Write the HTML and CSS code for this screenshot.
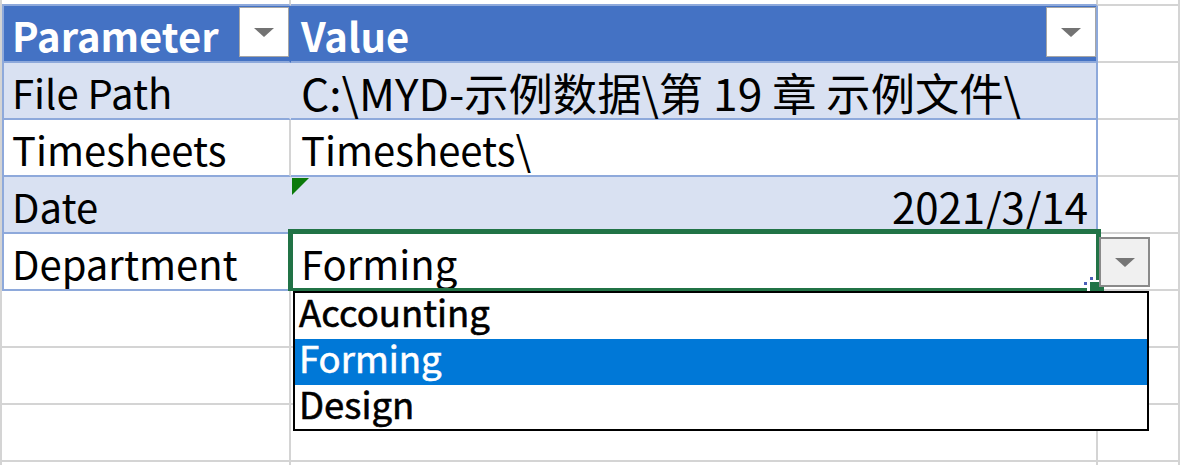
FILE: index.html
```html
<!DOCTYPE html>
<html lang="zh-CN">
<head>
<meta charset="utf-8">
<title>Parameters</title>
<link rel="stylesheet" href="styles.css">
</head>
<body>
<div class="sheet">
  <div class="c a top"></div><div class="c b top"></div><div class="c x"></div>

  <div class="c a t hd"><span>Parameter</span><span class="fbtn"></span></div>
  <div class="c b t hd"><span>Value</span><span class="fbtn"></span></div>
  <div class="c x"></div>

  <div class="c a t band"><span>File Path</span></div>
  <div class="c b t band"><span class="path">C:\MYD-示例数据\第 19 章 示例文件\</span></div>
  <div class="c x"></div>

  <div class="c a t wht"><span>Timesheets</span></div>
  <div class="c b t wht"><span>Timesheets\</span></div>
  <div class="c x"></div>

  <div class="c a t band"><span>Date</span></div>
  <div class="c b t band right err"><span class="num">2021/3/14</span></div>
  <div class="c x"></div>

  <div class="c a t wht"><span>Department</span></div>
  <div class="c b t wht"><span>Forming</span></div>
  <div class="c x"></div>

  <div class="c a"></div><div class="c b"></div><div class="c x"></div>
  <div class="c a"></div><div class="c b"></div><div class="c x"></div>
  <div class="c a"></div><div class="c b"></div><div class="c x"></div>
  <div class="c a"></div><div class="c b"></div><div class="c x"></div>
</div>

<div class="selection"></div>
<div class="handle"></div>
<div class="dot dot1"></div>
<div class="dot dot2"></div>
<div class="dvbtn"></div>

<ul class="dd">
  <li>Accounting</li>
  <li class="sel">Forming</li>
  <li>Design</li>
</ul>
</body>
</html>
```

FILE: styles.css
```css
html, body {
  margin: 0;
  padding: 0;
  background: #fff;
  overflow: hidden;
}
body {
  width: 1180px;
  height: 465px;
  position: relative;
  font-family: "Noto Sans CJK SC", "Noto Sans", sans-serif;
  color: #000;
}
.sheet {
  display: grid;
  grid-template-columns: 289px 807px 1fr;
  grid-template-rows: 6px;
  grid-auto-rows: 57px;
  border-left: 2px solid #d4d4d4;
  height: 465px;
  overflow: hidden;
}
.c {
  box-sizing: border-box;
  border-right: 2px solid #d4d4d4;
  border-bottom: 2px solid #d4d4d4;
  display: flex;
  align-items: flex-end;
  padding: 0 8px 2px 10px;
  font-size: 40px;
  line-height: 48px;
  white-space: nowrap;
  position: relative;
  min-width: 0;
}
.c.top { padding: 0; border-bottom-color: #8ea9db; }
.c.a.t { border-left: 2px solid #8ea9db; padding-left: 8px; }
.c.t { border-bottom-color: #8ea9db; }
.c.b.t { border-right-color: #8ea9db; }

.path { font-size: 44.3px; }
.num { font-size: 42px; }

.hd {
  background: #4472c4;
  color: #fff;
  font-weight: 700;
  justify-content: space-between;
  padding-right: 0;
}
.c.a.hd { border-right-color: #4472c4; }
.band { background: #d9e1f2; }
.c.a.band { border-right-color: #d9e1f2; }
.right { justify-content: flex-end; }

.fbtn {
  align-self: flex-start;
  margin-top: 1px;
  width: 50px;
  height: 50px;
  box-sizing: border-box;
  background: #fff;
  border: 1px solid #a6a6a6;
  display: flex;
  align-items: center;
  justify-content: center;
  flex: none;
}
.fbtn::after {
  content: "";
  border-left: 10px solid transparent;
  border-right: 10px solid transparent;
  border-top: 9px solid #737373;
}

.err::before {
  content: "";
  position: absolute;
  left: 1px;
  top: 1px;
  border-top: 17px solid #0b7a0b;
  border-right: 17px solid transparent;
}

.selection {
  position: absolute;
  left: 288px;
  top: 229px;
  width: 813px;
  height: 62px;
  box-sizing: border-box;
  border: 5px solid #217346;
  border-bottom-width: 3px;
}
.handle {
  position: absolute;
  left: 1087px;
  top: 280px;
  width: 17px;
  height: 12px;
  box-sizing: border-box;
  background: #217346;
  border-left: 3px solid #fff;
  border-top: 2px solid #fff;
}
.dot {
  position: absolute;
  width: 3px;
  height: 3px;
  background: #4a5eb8;
}
.dot1 { left: 1084px; top: 282px; }
.dot2 { left: 1090px; top: 277px; }

.dvbtn {
  position: absolute;
  left: 1099px;
  top: 237px;
  width: 51px;
  height: 50px;
  box-sizing: border-box;
  background: #f0f0f0;
  border: 2px solid #8a8a8a;
  display: flex;
  align-items: center;
  justify-content: center;
}
.dvbtn::after {
  content: "";
  border-left: 10px solid transparent;
  border-right: 10px solid transparent;
  border-top: 9px solid #767676;
}

.dd {
  position: absolute;
  left: 293px;
  top: 291px;
  width: 856px;
  height: 140px;
  box-sizing: border-box;
  margin: 0;
  padding: 0;
  list-style: none;
  background: #fff;
  border: 2px solid #000;
  font-size: 36.5px;
  font-weight: 400;
  -webkit-text-stroke: 0.6px currentColor;
}
.dd li {
  height: 46px;
  line-height: 38px;
  padding-left: 4px;
  box-sizing: border-box;
  white-space: nowrap;
}
.dd li.sel {
  background: #0078d7;
  color: #fff;
}
```
